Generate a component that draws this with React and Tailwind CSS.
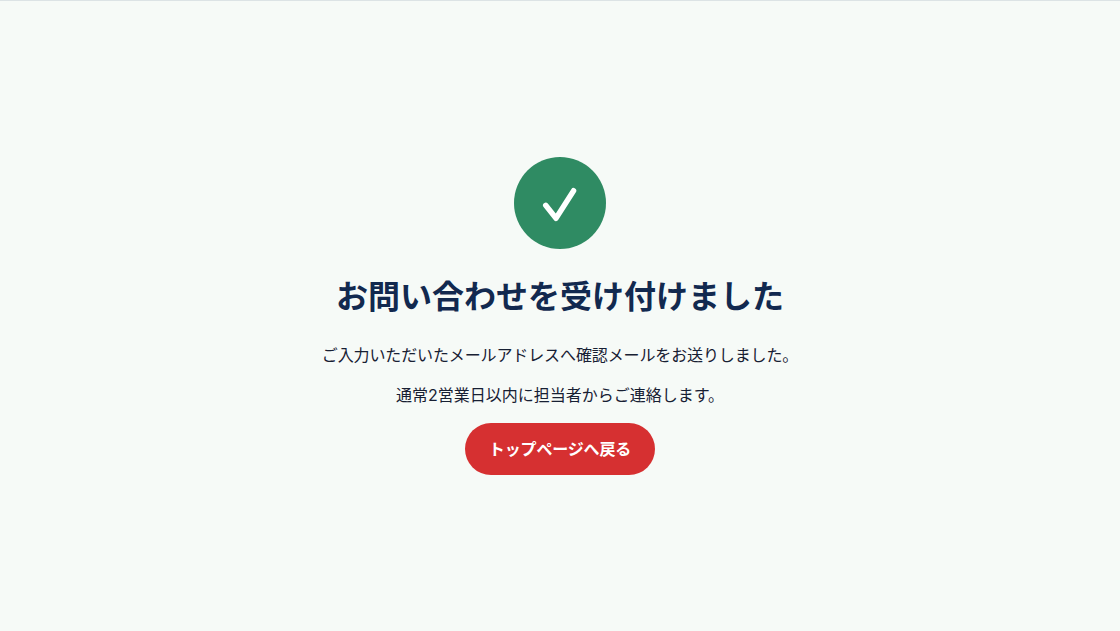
function CheckMark() {
  return (
    <div className="flex size-[92px] items-center justify-center rounded-full bg-[#2f8b63]">
      <svg
        width="92"
        height="92"
        viewBox="0 0 92 92"
        fill="none"
        stroke="white"
        strokeWidth="5.4"
        strokeLinecap="round"
        strokeLinejoin="round"
      >
        <path d="M31.7 48.3L42 61.3L59.6 33.7" />
      </svg>
    </div>
  );
}

function App() {
  return (
    <main className="flex h-screen flex-col items-center border-t border-[#dce3e5] bg-[#f6faf7] pt-[156px] font-['Inter','Noto_Sans_CJK_JP',sans-serif] text-[#172033]">
      <CheckMark />
      <h1 className="mt-6 text-[32px] leading-[48px] font-bold whitespace-nowrap text-[#12294f]">
        お問い合わせを受け付けました
      </h1>
      <p className="mt-[22px] text-base leading-[24px] tracking-[-0.12px] whitespace-nowrap">
        ご入力いただいたメールアドレスへ確認メールをお送りしました。
      </p>
      <p className="mt-4 text-base leading-[24px] whitespace-nowrap">
        通常2営業日以内に担当者からご連絡します。
      </p>
      <a
        href="#"
        className="mt-4 flex h-[52px] w-[190px] items-center justify-center rounded-full bg-[#d63031] text-base font-bold tracking-[-0.15px] whitespace-nowrap text-white"
      >
        トップページへ戻る
      </a>
    </main>
  );
}

export default App;
